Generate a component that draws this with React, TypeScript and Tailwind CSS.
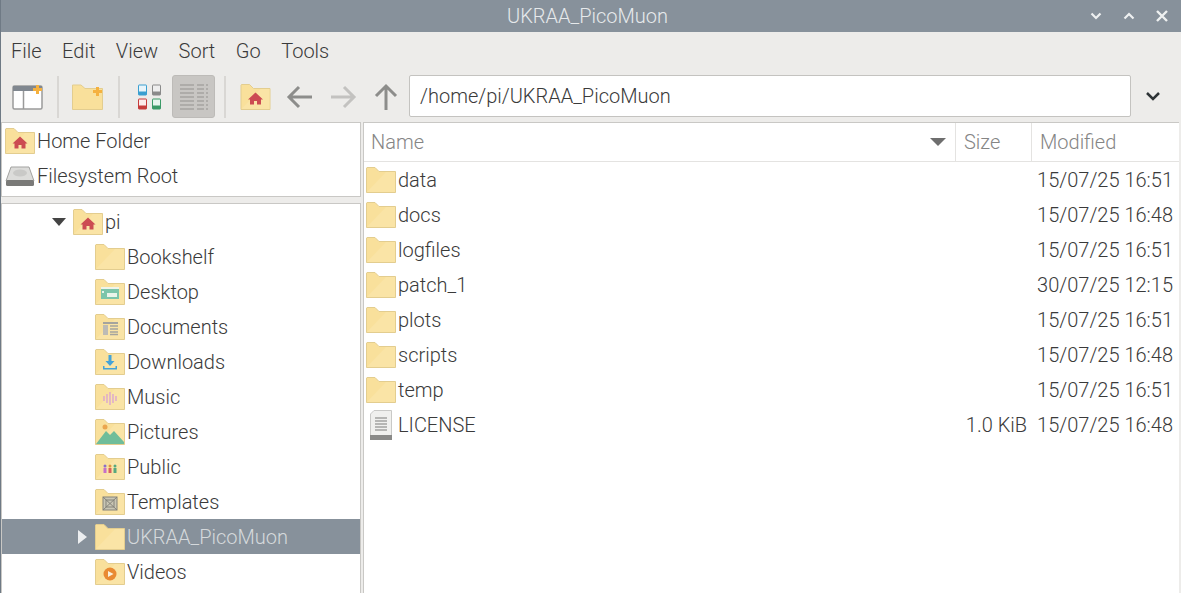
import React from "react";

function Folder({ children, w = 30, h = 26 }: { children?: React.ReactNode; w?: number; h?: number }) {
  return (
    <svg width={w} height={h} viewBox="0 0 30 26" className="shrink-0">
      <path d="M0.500 25.500V1L1 0.500H9L13 4.500H29.500V25.500Z" fill="#f9e09b" stroke="#e3cd8f" />
      <path d="M1 25L20 5H29V25Z" fill="#fae4a6" />
      {children}
    </svg>
  );
}

const Home = () => <path d="M15 8.500L22.500 15.500H20.500V20.500H16.500V17H13.500V20.500H9.500V15.500H7.500Z" fill="#cc4b52" />;

const Desktop = () => (
  <g>
    <rect x="6" y="8" width="18" height="2" fill="#eef4ea" />
    <rect x="6" y="10" width="18" height="10" fill="#7cc5aa" />
    <rect x="7" y="12" width="2" height="2" fill="#e8f4ea" />
    <rect x="12" y="14" width="10" height="4" fill="#eaf4ea" />
  </g>
);
const Documents = () => (
  <g>
    <rect x="8" y="8" width="15" height="2" fill="#a5a49e" />
    <rect x="8" y="11" width="5" height="10" fill="#bdbbb5" />
    <path d="M15 12h8M15 15h8M15 18h8M15 20.500h8" stroke="#a5a49e" strokeWidth="1.400" />
  </g>
);
const Downloads = () => (
  <g fill="#45a3d8">
    <path d="M13.500 6h3v6h3L15 17l-4.500-5h3z" />
    <path d="M8 17h1.500v2h11v-2H22v3.500H8z" />
  </g>
);
const Music = () => (
  <path d="M9 12v5M12 10v9M15 8v13M18 10v9M21 12v5" stroke="#d59bd8" strokeWidth="1.200" />
);
const Pictures = () => (
  <g>
    <circle cx="10" cy="8" r="2.500" fill="#eba64f" />
    <path d="M1 25L11 12L15 16L19 12L29 23V25Z" fill="#6fbd9a" />
  </g>
);
const Public = () => (
  <g>
    <circle cx="10" cy="12" r="1.500" fill="#8a70c9" />
    <circle cx="15" cy="12" r="1.500" fill="#e2963f" />
    <circle cx="20" cy="12" r="1.500" fill="#58a87f" />
    <rect x="8.500" y="14" width="3" height="5" fill="#c670c9" />
    <rect x="13.500" y="14" width="3" height="5" fill="#d9605f" />
    <rect x="18.500" y="14" width="3" height="5" fill="#58a87f" />
  </g>
);
const Templates = () => (
  <g fill="none" stroke="#84827a" strokeWidth="1">
    <rect x="8" y="8" width="14" height="13" fill="#c9c6b4" />
    <rect x="11" y="11" width="8" height="7" />
    <path d="M8 8l14 13M22 8L8 21" />
  </g>
);
const Videos = () => (
  <g>
    <circle cx="15" cy="15" r="6.500" fill="#e98a33" />
    <path d="M13 12l5.500 3-5.500 3z" fill="#faf0dc" />
  </g>
);

const tree: [string, React.ReactNode][] = [
  ["Bookshelf", null],
  ["Desktop", <Desktop />],
  ["Documents", <Documents />],
  ["Downloads", <Downloads />],
  ["Music", <Music />],
  ["Pictures", <Pictures />],
  ["Public", <Public />],
  ["Templates", <Templates />],
];

const files = [
  ["data", "15/07/25 16:51"],
  ["docs", "15/07/25 16:48"],
  ["logfiles", "15/07/25 16:51"],
  ["patch_1", "30/07/25 12:15"],
  ["plots", "15/07/25 16:51"],
  ["scripts", "15/07/25 16:48"],
  ["temp", "15/07/25 16:51"],
];

function Sep() {
  return <div className="w-[2px] h-[42px] bg-[#d9d7d4] shrink-0" />;
}

export default function App() {
  return (
    <div className="w-[1181px] h-[593px] overflow-hidden bg-[#edecea] text-[20px] leading-[24px] font-light text-[#3a3a3a] font-['Roboto',sans-serif] border-l border-[#6f7a85]">
      <div className="h-[32px] bg-[#87919b] flex items-center relative">
        <div className="flex-1 text-center text-[#e6e9eb] pr-[7px]">UKRAA_PicoMuon</div>
        <div className="absolute right-[12px] top-[8px] flex gap-[19px] items-center h-[16px]">
          <svg width="14" height="14" viewBox="0 0 14 14"><path d="M2.500 4.500L7 9l4.500-4.500" fill="none" stroke="#eef0f1" strokeWidth="2.200" /></svg>
          <svg width="14" height="14" viewBox="0 0 14 14"><path d="M2.500 9.500L7 5l4.500 4.500" fill="none" stroke="#eef0f1" strokeWidth="2.200" /></svg>
          <svg width="14" height="14" viewBox="0 0 14 14"><path d="M2 2l10 10M12 2L2 12" fill="none" stroke="#eef0f1" strokeWidth="2.400" /></svg>
        </div>
      </div>

      <div className="h-[38px] flex items-center pl-[10px] gap-[20.5px]">
        <span>File</span><span>Edit</span><span>View</span><span>Sort</span><span>Go</span><span>Tools</span>
      </div>

      <div className="h-[52px] flex items-start pt-[5px] pl-[11px]">
        <div className="flex items-center h-[43px]">
          <svg width="31" height="26" viewBox="0 0 31 26" className="mr-[14px]">
            <rect x="1" y="2" width="29" height="23" rx="1.500" fill="#fff" stroke="#9a9a9a" strokeWidth="1.500" />
            <rect x="1" y="2" width="29" height="5" fill="#80878f" />
            <path d="M11.500 7v18" stroke="#9a9a9a" strokeWidth="1.500" />
            <path d="M25.500 1v9M21 5.500h9" stroke="#f5b13f" strokeWidth="3" />
          </svg>
          <Sep />
          <svg width="32" height="26" viewBox="0 0 32 26" className="ml-[13px] mr-[14px]">
            <path d="M0.500 25.500V1H9L13 4.500H30.500V25.500Z" fill="#f9e09b" stroke="#e3cd8f" />
            <path d="M25.500 3v9M21 7.500h9" stroke="#f5b13f" strokeWidth="3" />
          </svg>
          <Sep />
          <svg width="24" height="26" viewBox="0 0 24 26" className="ml-[18px] mr-[10px]">
            <rect x="0.500" y="1" width="8" height="10" rx="0.500" fill="#e8f4fa" stroke="#3a9fd0" />
            <rect x="0.500" y="7.500" width="8" height="3.500" fill="#3a9fd0" />
            <rect x="14.500" y="1" width="8" height="10" rx="0.500" fill="#eee" stroke="#8a8a8a" />
            <rect x="14.500" y="7.500" width="8" height="3.500" fill="#8a8a8a" />
            <rect x="0.500" y="15" width="8" height="10" rx="0.500" fill="#fbeaea" stroke="#c63b3b" />
            <rect x="0.500" y="21.500" width="8" height="3.500" fill="#c63b3b" />
            <rect x="14.500" y="15" width="8" height="10" rx="0.500" fill="#e8f5ee" stroke="#3c9a68" />
            <rect x="14.500" y="21.500" width="8" height="3.500" fill="#3c9a68" />
          </svg>
          <div className="w-[43px] h-[43px] bg-[#c8c6c3] border border-[#bdbbb8] rounded-[3px] flex items-center justify-center mr-[9px]">
            <svg width="30" height="28" viewBox="0 0 30 28">
              <path d="M1 2h14M1 6h14M1 10h14M1 14h14M1 18h14M1 22h14M1 26h14" stroke="#a5a4a1" strokeWidth="1.500" />
              <path d="M18 2h7M18 6h7M18 10h7M18 14h7M18 18h7M18 22h7M18 26h7M27 2h2M27 6h2M27 10h2M27 14h2M27 18h2M27 22h2M27 26h2" stroke="#a5a4a1" strokeWidth="1.500" />
            </svg>
          </div>
          <Sep />
          <div className="ml-[14px]"><Folder w={31} h={26}><Home /></Folder></div>
          <svg width="28" height="26" viewBox="0 0 28 26" className="ml-[15px]"><path d="M26 13H3M13 3L3 13l10 10" fill="none" stroke="#8d8d8b" strokeWidth="3" /></svg>
          <svg width="28" height="26" viewBox="0 0 28 26" className="ml-[15px]"><path d="M2 13h23M15 3l10 10-10 10" fill="none" stroke="#c3c2c0" strokeWidth="3" /></svg>
          <svg width="26" height="28" viewBox="0 0 26 28" className="ml-[16px]"><path d="M13 27V3M3 13L13 3l10 10" fill="none" stroke="#8d8d8b" strokeWidth="3" /></svg>
        </div>
        <div className="ml-[10px] w-[722px] h-[42px] bg-white border border-[#c4c3c0] rounded-[2px] flex items-center pl-[10px]">/home/pi/UKRAA_PicoMuon</div>
        <svg width="16" height="12" viewBox="0 0 16 12" className="ml-[14px] mt-[15px]"><path d="M2 3l6 6 6-6" fill="none" stroke="#2e3436" strokeWidth="2.500" /></svg>
      </div>

      <div className="flex h-[471px] pr-[1px]">
        <div className="w-[360px] shrink-0 flex flex-col">
          <div className="h-[75px] bg-white border border-[#c9c8c5] shrink-0">
            <div className="h-[35px] flex items-center pl-[3px] gap-[2px]"><Folder w={30} h={26}><Home /></Folder><span>Home Folder</span></div>
            <div className="h-[35px] flex items-center pl-[3px] gap-[2px]">
              <svg width="30" height="24" viewBox="0 0 30 24" className="shrink-0">
                <path d="M6 3h18l5 14H1z" fill="#dcdcda" stroke="#a3a3a1" />
                <ellipse cx="15" cy="9" rx="7" ry="3.500" fill="#c9c9c7" />
                <rect x="1" y="16" width="28" height="6" rx="1.500" fill="#7a7a78" />
              </svg>
              <span>Filesystem Root</span>
            </div>
          </div>
          <div className="h-[6px] shrink-0" />
          <div className="flex-1 bg-white border border-[#c9c8c5] border-b-0 overflow-hidden">
            <div className="h-[35px] flex items-center pl-[50px]">
              <svg width="14" height="8" viewBox="0 0 14 8" className="mr-[7px]"><path d="M0 0h14L7 8z" fill="#444" /></svg>
              <Folder><Home /></Folder>
              <span className="ml-[2px]">pi</span>
            </div>
            {tree.map(([n, ic]) => (
              <div key={n} className="h-[35px] flex items-center pl-[93px]">
                <Folder>{ic}</Folder>
                <span className="ml-[2px]">{n}</span>
              </div>
            ))}
            <div className="h-[35px] flex items-center pl-[76px] bg-[#87919b]">
              <svg width="9" height="14" viewBox="0 0 9 14" className="mr-[8px]"><path d="M0 0l9 7-9 7z" fill="#eceef0" /></svg>
              <Folder />
              <span className="ml-[2px] text-[#d5d9dc]">UKRAA_PicoMuon</span>
            </div>
            <div className="h-[35px] flex items-center pl-[93px]">
              <Folder><Videos /></Folder>
              <span className="ml-[2px]">Videos</span>
            </div>
          </div>
        </div>

        <div className="w-[2px] shrink-0" />

        <div className="flex-1 bg-white border border-[#c9c8c5] border-r-0 border-b-0 mr-[1px] flex flex-col">
          <div className="h-[39px] flex border-b border-[#e4e3e1] text-[#858585] shrink-0">
            <div className="w-[592px] flex items-center pl-[7px] pr-[9px] justify-between border-r border-[#e4e3e1]">
              <span>Name</span>
              <svg width="16" height="8" viewBox="0 0 16 8"><path d="M0 0h16L8 8z" fill="#6e6e6e" /></svg>
            </div>
            <div className="w-[76px] flex items-center pl-[8px] border-r border-[#e4e3e1]">Size</div>
            <div className="flex items-center pl-[8px]">Modified</div>
          </div>
          {files.map(([n, d]) => (
            <div key={n} className="h-[35px] flex items-center pl-[2px] shrink-0">
              <Folder />
              <span className="ml-[2px] flex-1">{n}</span>
              <span className="pr-[6px]">{d}</span>
            </div>
          ))}
          <div className="h-[35px] flex items-center pl-[2px] shrink-0">
            <svg width="30" height="32" viewBox="0 0 30 32" className="shrink-0">
              <path d="M8 1.500H25.500V27H4.500V5Z" fill="#f0f0ee" stroke="#c9c9c7" />
              <path d="M9 9h12M9 12h12M9 15h12M9 18h12M9 21h12" stroke="#a3a3a1" strokeWidth="1.300" />
              <rect x="4" y="26" width="22" height="5" fill="#8a8a88" />
            </svg>
            <span className="ml-[2px] flex-1">LICENSE</span>
            <span className="pr-[10px]">1.0 KiB</span>
            <span className="pr-[6px]">15/07/25 16:48</span>
          </div>
        </div>
      </div>
    </div>
  );
}
